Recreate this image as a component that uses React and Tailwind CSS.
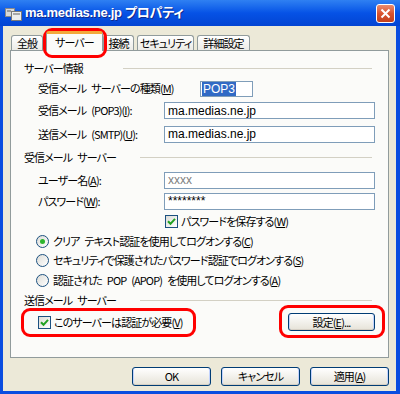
import React from "react";

const Mn = ({ k }) => (
  <span>
    (<span className="underline">{k}</span>)
  </span>
);

// visible word gap (the negative tracking swallows normal spaces)
const Sp = () => <span className="inline-block w-[5px]" />;

const GroupHeader = ({ children, w }) => (
  <div className="flex items-center h-full">
    <span className={w}>{children}</span>
    <div className="flex-1 h-px bg-[#D3D0C4]" />
  </div>
);

const Field = ({ children, gray }) => (
  <div
    className={
      "w-[211px] h-[17px] border border-[#7F9DB9] bg-white flex items-center pl-[3px] font-['Liberation_Sans',sans-serif] text-[12px] tracking-normal " +
      (gray ? "text-[#808080]" : "text-black")
    }
  >
    {children}
  </div>
);

const Check = () => (
  <span className="w-[13px] h-[13px] shrink-0 border border-[#1C5180] bg-linear-to-br from-[#DCDCD7] to-white flex items-center justify-center">
    <svg width="9" height="9" viewBox="0 0 9 9">
      <path d="M1 4.2 L3.5 6.8 L8 1.8" stroke="#21A121" strokeWidth="2" fill="none" />
    </svg>
  </span>
);

const Radio = ({ on }) => (
  <span className="w-[13px] h-[13px] shrink-0 rounded-full border border-[#1C5180] bg-linear-to-br from-[#DCDCD7] to-white flex items-center justify-center">
    {on && <span className="w-[5px] h-[5px] rounded-full bg-[#2DB52D]" />}
  </span>
);

const XpButton = ({ className, children }) => (
  <div
    className={
      "border border-[#003C74] rounded-[3px] bg-linear-to-b from-white to-[#E6E3D8] shadow-[inset_0_-1px_0_#D6D0C5,inset_1px_0_0_#C3D3FD,inset_-1px_0_0_#C3D3FD] flex items-center justify-center whitespace-nowrap " +
      className
    }
  >
    {children}
  </div>
);

const Tab = ({ w, children }) => (
  <div
    className={
      "h-[15px] border border-b-0 border-[#919B9C] rounded-t-[3px] bg-linear-to-b from-white to-[#ECEBE6] flex items-center justify-center leading-none whitespace-nowrap " +
      w
    }
  >
    {children}
  </div>
);

export default function App() {
  return (
    <div className="relative w-[400px] h-[394px] bg-[#0A4DE0] flex flex-col font-['Noto_Sans_CJK_JP',sans-serif] [font-feature-settings:'palt'] text-[11px] tracking-[-0.9px] text-black whitespace-nowrap">
      {/* title bar */}
      <div className="h-[26px] shrink-0 bg-linear-to-b from-[#2F80F2] via-[#0652E6] to-[#0344D2] flex items-center pl-[5px] pr-[5px]">
        <svg width="17" height="15" viewBox="0 0 17 15" className="shrink-0">
          <rect x="0.5" y="2.5" width="9" height="8" fill="#D8D8D8" stroke="#8A8A8A" />
          <rect x="6.5" y="5.5" width="10" height="9" fill="#EDEDED" stroke="#7A7A7A" />
          <rect x="8" y="7" width="7" height="2" fill="#A8A8A8" />
          <rect x="2" y="4" width="4" height="2" fill="#9A9A9A" />
        </svg>
        <span className="ml-[3px] font-['Liberation_Sans','Noto_Sans_CJK_JP',sans-serif] font-bold text-[13px] tracking-[-0.3px] text-white [text-shadow:1px_1px_0_#0F2A8C]">
          ma.medias.ne.jp プロパティ
        </span>
        <div className="ml-auto w-[19px] h-[19px] rounded-[3px] border border-white bg-linear-to-b from-[#E98B6E] via-[#D9532F] to-[#C2401C] flex items-center justify-center">
          <svg width="11" height="11" viewBox="0 0 11 11">
            <path d="M1.5 1.5 L9.5 9.5 M9.5 1.5 L1.5 9.5" stroke="white" strokeWidth="2" />
          </svg>
        </div>
      </div>

      {/* body */}
      <div className="flex-1 ml-[3px] mr-[4px] mb-[3px] bg-[#ECE9D8] flex flex-col">
        <div className="pt-[5px] pl-[8px]">
          <div className="h-[19px] flex items-end">
            <Tab w="w-[32px]">全般</Tab>
            <div className="relative z-10 ml-[3px] w-[57px] h-[20px] mb-[-1px] border-x border-[#919B9C] border-t-[3px] border-t-[#F3A93A] rounded-t-[3px] bg-[#FBFBF9] flex items-center justify-center leading-none">
              サーバー
            </div>
            <Tab w="w-[31px]">接続</Tab>
            <Tab w="ml-[3px] w-[57px]">セキュリティ</Tab>
            <Tab w="ml-[3px] w-[53px]">詳細設定</Tab>
          </div>
        </div>

        <div className="ml-[7px] w-[379px] h-[308px] border border-[#919B9C] bg-[#FBFBF9] pt-[7px] flex flex-col">
          <div className="h-[20px] pl-[13px] pr-[16px]">
            <GroupHeader w="w-[99px]">サーバー情報</GroupHeader>
          </div>
          <div className="h-[21px] pl-[27px] flex items-center">
            <span className="w-[162px]">
              受信メール<Sp />サーバーの種類<Mn k="M" />
            </span>
            <div className="w-[53px] h-[16px] border border-[#7F9DB9] bg-white flex items-center pl-px font-['Liberation_Sans',sans-serif] text-[12px] tracking-normal">
              <span className="bg-[#316AC5] text-white h-[14px] leading-[14px] px-px">POP3</span>
            </div>
          </div>
          <div className="h-[23px] pl-[27px] flex items-center">
            <span className="w-[126px]">
              受信メール<Sp />(POP3)<Mn k="I" />:
            </span>
            <Field>ma.medias.ne.jp</Field>
          </div>
          <div className="h-[24px] pl-[27px] flex items-center">
            <span className="w-[126px]">
              送信メール<Sp />(SMTP)<Mn k="U" />:
            </span>
            <Field>ma.medias.ne.jp</Field>
          </div>
          <div className="h-[23px] pl-[13px] pr-[16px]">
            <GroupHeader w="w-[116px]">
              受信メール<Sp />サーバー
            </GroupHeader>
          </div>
          <div className="h-[22px] pl-[27px] flex items-center">
            <span className="w-[126px]">
              ユーザー名<Mn k="A" />:
            </span>
            <Field gray>xxxx</Field>
          </div>
          <div className="h-[20px] pl-[27px] flex items-center">
            <span className="w-[126px]">
              パスワード<Mn k="W" />:
            </span>
            <Field>********</Field>
          </div>
          <div className="h-[21px] pl-[154px] flex items-center gap-[3px]">
            <Check />
            <span>
              パスワードを保存する<Mn k="W" />
            </span>
          </div>
          <div className="h-[19px] pl-[25px] flex items-center gap-[4px]">
            <Radio on />
            <span>
              クリア<Sp />テキスト認証を使用してログオンする<Mn k="C" />
            </span>
          </div>
          <div className="h-[19px] pl-[25px] flex items-center gap-[4px]">
            <Radio />
            <span>
              セキュリティで保護されたパスワード認証でログオンする<Mn k="S" />
            </span>
          </div>
          <div className="h-[20px] pl-[25px] flex items-center gap-[4px]">
            <Radio />
            <span>
              認証された<Sp />POP<Sp />(APOP)<Sp />を使用してログオンする<Mn k="A" />
            </span>
          </div>
          <div className="h-[21px] pl-[13px] pr-[16px]">
            <GroupHeader w="w-[116px]">
              送信メール<Sp />サーバー
            </GroupHeader>
          </div>
          <div className="h-[22px] pl-[27px] pr-[13px] flex items-center">
            <Check />
            <span className="ml-[3px]">
              このサーバーは認証が必要<Mn k="V" />
            </span>
            <XpButton className="ml-auto w-[87px] h-[18px]">
              設定<Mn k="E" />...
            </XpButton>
          </div>
        </div>

        <div className="mt-[9px] flex justify-end gap-[10px] pr-[7px]">
          <XpButton className="w-[79px] h-[19px]">OK</XpButton>
          <XpButton className="w-[79px] h-[19px]">キャンセル</XpButton>
          <XpButton className="w-[79px] h-[19px]">
            適用<Mn k="A" />
          </XpButton>
        </div>
      </div>

      {/* red annotation marks */}
      <div className="absolute left-[43px] top-[28px] w-[64px] h-[30px] border-[3px] border-[#FF0000] rounded-[9px] pointer-events-none" />
      <div className="absolute left-[21px] top-[308px] w-[175px] h-[29px] border-[3px] border-[#FF0000] rounded-[9px] pointer-events-none" />
      <div className="absolute left-[279px] top-[305px] w-[106px] h-[33px] border-[3px] border-[#FF0000] rounded-[9px] pointer-events-none" />
    </div>
  );
}
